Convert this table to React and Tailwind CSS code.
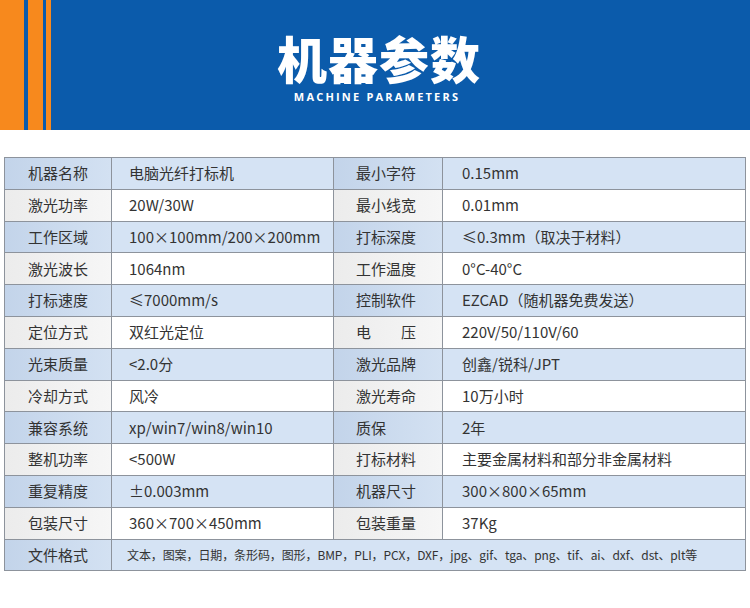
import React from "react";

const rows = [
  ["机器名称", "电脑光纤打标机", "最小字符", "0.15mm"],
  ["激光功率", "20W/30W", "最小线宽", "0.01mm"],
  ["工作区域", "100×100mm/200×200mm", "打标深度", "≤0.3mm（取决于材料）"],
  ["激光波长", "1064nm", "工作温度", "0°C-40°C"],
  ["打标速度", "≤7000mm/s", "控制软件", "EZCAD（随机器免费发送）"],
  ["定位方式", "双红光定位", "电压", "220V/50/110V/60"],
  ["光束质量", "<2.0分", "激光品牌", "创鑫/锐科/JPT"],
  ["冷却方式", "风冷", "激光寿命", "10万小时"],
  ["兼容系统", "xp/win7/win8/win10", "质保", "2年"],
  ["整机功率", "<500W", "打标材料", "主要金属材料和部分非金属材料"],
  ["重复精度", "±0.003mm", "机器尺寸", "300×800×65mm"],
  ["包装尺寸", "360×700×450mm", "包装重量", "37Kg"],
];

const font = { fontFamily: '"Noto Sans CJK SC", "Noto Sans", sans-serif' };

function Label({ blue, children, left }) {
  return (
    <div
      className={`h-[31.8px] border-r border-b border-[#8d939c] flex items-center text-[15px] text-[#333] ${
        left ? "pl-[22px]" : "justify-center"
      } ${
        blue ? "bg-gradient-to-r from-[#c3d4ea] to-[#d3e1f2]" : "bg-gradient-to-r from-[#ececec] to-[#f6f6f6]"
      }`}
    >
      {children === "电压" ? (
        <span className="flex w-[60px] justify-between">
          <span>电</span>
          <span>压</span>
        </span>
      ) : (
        children
      )}
    </div>
  );
}

function Value({ blue, children, pl }) {
  return (
    <div
      className={`h-[31.8px] border-r border-b border-[#8d939c] flex items-center text-[15px] text-[#333] ${pl} ${
        blue ? "bg-[#d5e3f4]" : "bg-white"
      }`}
    >
      {children}
    </div>
  );
}

export default function App() {
  return (
    <div className="w-[750px] h-[608px] bg-white overflow-hidden" style={font}>
      <div className="h-[130px] bg-[#0b5bab] flex relative">
        <div className="flex h-full">
          <div className="w-[24px] bg-[#f7891d]" />
          <div className="w-[4px]" />
          <div className="w-[15px] bg-[#f7891d]" />
          <div className="w-[3px]" />
          <div className="w-[5px] bg-[#f7891d]" />
        </div>
        <div className="absolute left-0 right-0 top-[30px] flex flex-col items-center">
          <div className="text-[50px] leading-[54px] font-black text-white tracking-[1px] ml-[8px]">机器参数</div>
          <div className="text-[11px] leading-[14px] font-bold text-white tracking-[2.2px] mt-[6px] ml-[4px]" style={{ fontFamily: '"Open Sans", "Noto Sans", sans-serif' }}>
            MACHINE PARAMETERS
          </div>
        </div>
      </div>
      <div className="mt-[27px] ml-[4px] w-[742px] border-l border-t border-[#8d939c] grid grid-cols-[107px_222px_109px_303px]">
        {rows.map((r, i) => {
          const blue = i % 2 === 0;
          return (
            <React.Fragment key={i}>
              <Label blue={blue}>{r[0]}</Label>
              <Value blue={blue} pl="pl-[17px]">{r[1]}</Value>
              <Label blue={blue} left>{r[2]}</Label>
              <Value blue={blue} pl="pl-[19px]">{r[3]}</Value>
            </React.Fragment>
          );
        })}
        <Label blue>文件格式</Label>
        <div className="col-span-3 h-[31.8px] border-r border-b border-[#8d939c] bg-[#d5e3f4] flex items-center pl-[15px] text-[12px] tracking-[-0.1px] text-[#333] whitespace-nowrap">
          文本，图案，日期，条形码，图形，BMP，PLI，PCX，DXF，jpg、gif、tga、png、tif、ai、dxf、dst、plt等
        </div>
      </div>
    </div>
  );
}
